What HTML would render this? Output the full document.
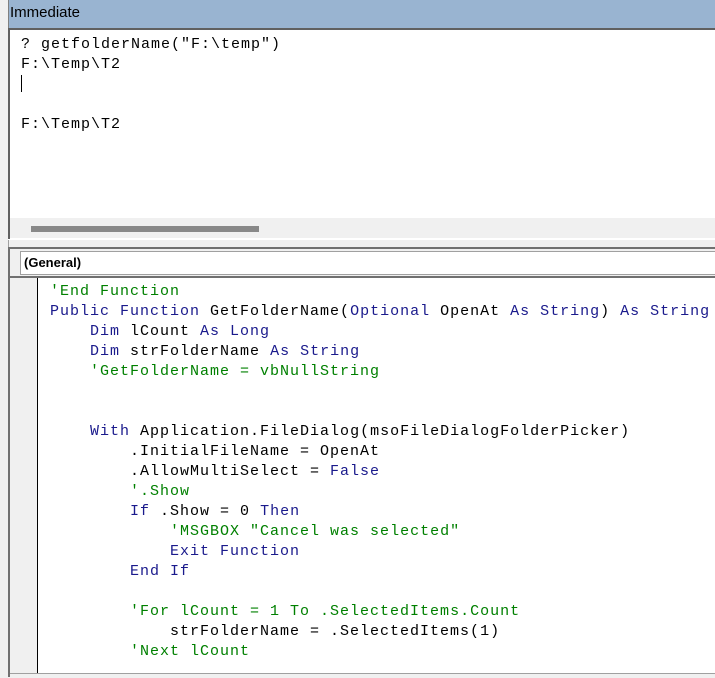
<!DOCTYPE html>
<html><head><style>
body{margin:0;width:715px;height:677px;overflow:hidden;background:#f0f0f0;position:relative;font-family:"Liberation Sans",sans-serif}
.abs{position:absolute}
.mono{font-family:"Liberation Mono","Courier New",monospace;font-size:15px;letter-spacing:1px;white-space:pre;line-height:20px}
.k{color:#1a1a8c}.c{color:#008000}
</style></head><body>
<div class="abs" style="left:0;top:0;width:8px;height:677px;background:#f0f0f0;border-right:1px solid #a0a0a0"></div>
<div class="abs" style="left:8px;top:0;width:707px;height:28px;background:#99b4d1;border-left:1px solid #808080"></div>
<div class="abs" style="left:10px;top:4px;font-size:15px;color:#000">Immediate</div>
<div class="abs" style="left:8px;top:28px;width:707px;height:211px;background:#fff;border-left:2px solid #606060;border-top:2px solid #606060;box-sizing:border-box"></div>
<div class="abs mono" style="left:21px;top:35px;color:#000">? getfolderName("F:\temp")
F:\Temp\T2


F:\Temp\T2</div>
<div class="abs" style="left:21px;top:75px;width:1px;height:17px;background:#000"></div>
<div class="abs" style="left:10px;top:218px;width:705px;height:20px;background:#f0f0f0"></div>
<div class="abs" style="left:31px;top:226px;width:228px;height:6px;background:#888"></div>
<div class="abs" style="left:8px;top:239px;width:707px;height:1px;background:#fff"></div>
<div class="abs" style="left:8px;top:247px;width:707px;height:2px;background:#707070"></div>
<div class="abs" style="left:8px;top:247px;width:2px;height:430px;background:#707070"></div>
<div class="abs" style="left:20px;top:251px;width:700px;height:24px;background:#fff;border:1px solid #a0a0a0;box-sizing:border-box"></div>
<div class="abs" style="left:24px;top:255px;font-size:13px;font-weight:bold">(General)</div>
<div class="abs" style="left:10px;top:276px;width:705px;height:2px;background:#707070"></div>
<div class="abs" style="left:10px;top:278px;width:27px;height:399px;background:#f0f0f0"></div>
<div class="abs" style="left:37px;top:278px;width:678px;height:399px;background:#fff;border-left:1px solid #000"></div>
<div class="abs mono" style="left:50px;top:282px;color:#000"><span class="c">'End Function</span>
<span class="k">Public Function</span> GetFolderName(<span class="k">Optional</span> OpenAt <span class="k">As String</span>) <span class="k">As String</span>
    <span class="k">Dim</span> lCount <span class="k">As Long</span>
    <span class="k">Dim</span> strFolderName <span class="k">As String</span>
    <span class="c">'GetFolderName = vbNullString</span>


    <span class="k">With</span> Application.FileDialog(msoFileDialogFolderPicker)
        .InitialFileName = OpenAt
        .AllowMultiSelect = <span class="k">False</span>
        <span class="c">'.Show</span>
        <span class="k">If</span> .Show = 0 <span class="k">Then</span>
            <span class="c">'MSGBOX "Cancel was selected"</span>
            <span class="k">Exit Function</span>
        <span class="k">End If</span>

        <span class="c">'For lCount = 1 To .SelectedItems.Count</span>
            strFolderName = .SelectedItems(1)
        <span class="c">'Next lCount</span></div>
<div class="abs" style="left:10px;top:673px;width:705px;height:4px;background:#f0f0f0;border-top:1px solid #a0a0a0"></div>
</body></html>
